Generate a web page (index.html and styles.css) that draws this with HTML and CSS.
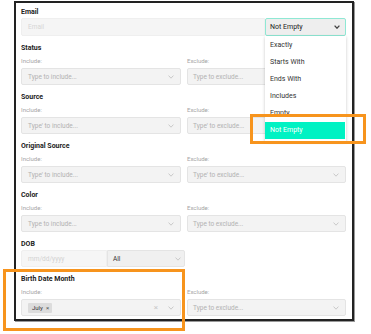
FILE: index.html
```html
<!DOCTYPE html>
<html lang="en">

<head>
    <meta charset="UTF-8">
    <title>Filters</title>
    <link rel="stylesheet" href="styles.css">
</head>

<body>

    <div class="panel">
        <!-- Email -->
        <div class="field">
            <div class="field-title">Email</div>
            <div class="email-row">
                <div class="box email-input"><span class="placeholder">Email</span></div>
                <div class="op-wrap">
                    <div class="box op-select">
                        <span>Not Empty</span>
                        <svg class="chev dark" width="6" height="4" viewBox="0 0 6 4"><path d="M0.6 0.6 L3 3.2 L5.4 0.6" /></svg>
                    </div>
                    <ul class="op-menu">
                        <li>Exactly</li>
                        <li>Starts With</li>
                        <li>Ends With</li>
                        <li>Includes</li>
                        <li>Empty</li>
                        <li class="selected">Not Empty</li>
                    </ul>
                </div>
            </div>
        </div>

        <!-- Status -->
        <div class="field">
            <div class="field-title">Status</div>
            <div class="pair">
                <div>
                    <div class="sub-label">Include:</div>
                    <div class="box multi"><span class="placeholder">Type to include...</span>
                        <svg class="chev" width="6" height="4" viewBox="0 0 6 4"><path d="M0.6 0.6 L3 3.2 L5.4 0.6" /></svg></div>
                </div>
                <div>
                    <div class="sub-label">Exclude:</div>
                    <div class="box multi"><span class="placeholder">Type to exclude...</span>
                        <svg class="chev" width="6" height="4" viewBox="0 0 6 4"><path d="M0.6 0.6 L3 3.2 L5.4 0.6" /></svg></div>
                </div>
            </div>
        </div>

        <!-- Source -->
        <div class="field">
            <div class="field-title">Source</div>
            <div class="pair">
                <div>
                    <div class="sub-label">Include:</div>
                    <div class="box multi"><span class="placeholder">Type' to include...</span>
                        <svg class="chev" width="6" height="4" viewBox="0 0 6 4"><path d="M0.6 0.6 L3 3.2 L5.4 0.6" /></svg></div>
                </div>
                <div>
                    <div class="sub-label">Exclude:</div>
                    <div class="box multi"><span class="placeholder">Type' to exclude...</span>
                        <svg class="chev" width="6" height="4" viewBox="0 0 6 4"><path d="M0.6 0.6 L3 3.2 L5.4 0.6" /></svg></div>
                </div>
            </div>
        </div>

        <!-- Original Source -->
        <div class="field">
            <div class="field-title">Original Source</div>
            <div class="pair">
                <div>
                    <div class="sub-label">Include:</div>
                    <div class="box multi"><span class="placeholder">Type' to include...</span>
                        <svg class="chev" width="6" height="4" viewBox="0 0 6 4"><path d="M0.6 0.6 L3 3.2 L5.4 0.6" /></svg></div>
                </div>
                <div>
                    <div class="sub-label">Exclude:</div>
                    <div class="box multi"><span class="placeholder">Type' to exclude...</span>
                        <svg class="chev" width="6" height="4" viewBox="0 0 6 4"><path d="M0.6 0.6 L3 3.2 L5.4 0.6" /></svg></div>
                </div>
            </div>
        </div>

        <!-- Color -->
        <div class="field">
            <div class="field-title">Color</div>
            <div class="pair">
                <div>
                    <div class="sub-label">Include:</div>
                    <div class="box multi"><span class="placeholder">Type to include...</span>
                        <svg class="chev" width="6" height="4" viewBox="0 0 6 4"><path d="M0.6 0.6 L3 3.2 L5.4 0.6" /></svg></div>
                </div>
                <div>
                    <div class="sub-label">Exclude:</div>
                    <div class="box multi"><span class="placeholder">Type to exclude...</span>
                        <svg class="chev" width="6" height="4" viewBox="0 0 6 4"><path d="M0.6 0.6 L3 3.2 L5.4 0.6" /></svg></div>
                </div>
            </div>
        </div>

        <!-- DOB -->
        <div class="field">
            <div class="field-title">DOB</div>
            <div class="dob-row">
                <div class="box date-input"><span class="placeholder faint">mm/dd/yyyy</span></div>
                <div class="box multi all-select"><span>All</span>
                    <svg class="chev" width="6" height="4" viewBox="0 0 6 4"><path d="M0.6 0.6 L3 3.2 L5.4 0.6" /></svg></div>
            </div>
        </div>

        <!-- Birth Date Month -->
        <div class="field">
            <div class="field-title">Birth Date Month</div>
            <div class="pair">
                <div>
                    <div class="sub-label">Include:</div>
                    <div class="box multi">
                        <span class="chip">July <span class="chip-x">&times;</span></span>
                        <span class="clear-x">&times;</span>
                        <svg class="chev" width="6" height="4" viewBox="0 0 6 4"><path d="M0.6 0.6 L3 3.2 L5.4 0.6" /></svg>
                    </div>
                </div>
                <div>
                    <div class="sub-label">Exclude:</div>
                    <div class="box multi"><span class="placeholder">Type to exclude...</span>
                        <svg class="chev" width="6" height="4" viewBox="0 0 6 4"><path d="M0.6 0.6 L3 3.2 L5.4 0.6" /></svg></div>
                </div>
            </div>
        </div>
    </div>

    <!-- highlight boxes drawn over the screenshot -->
    <div class="callout callout-menu"></div>
    <div class="callout callout-month"></div>

</body>

</html>
```

FILE: styles.css
```css
* {
    box-sizing: border-box;
}

body {
    font-family: Roboto, 'Liberation Sans', sans-serif;
    margin: 0;
    padding: 0;
    background-color: white;
    position: relative;
    width: 371px;
    height: 334px;
    overflow: hidden;
}

.panel {
    margin: 1px 0 0 14px;
    width: 340px;
    height: 320px;
    border: 2px solid #222;
    box-shadow: 1px 1px 0 #999;
    padding: 3px 6px 4px 5px;
    display: flex;
    flex-direction: column;
    gap: 6px;
    background-color: white;
}

.field {
    display: flex;
    flex-direction: column;
}

.field-title {
    font-size: 7px;
    font-weight: 700;
    line-height: 11px;
    padding-top: 1px;
    color: #222;
    margin-bottom: 2px;
}

.sub-label {
    font-size: 6px;
    line-height: 10px;
    color: #a5a5a5;
    margin-bottom: 2px;
}

.box {
    height: 17px;
    border: 1px solid #e4e4e4;
    border-radius: 2px;
    background-color: #f3f3f3;
    display: flex;
    align-items: center;
    font-size: 6.5px;
    color: #333;
}

.placeholder {
    color: #b2b2b2;
}

.placeholder.faint {
    color: #d2d2d2;
}

.chev {
    flex-shrink: 0;
    margin-left: auto;
    fill: none;
    stroke: #c4c4c4;
    stroke-width: 0.9;
}

.chev.dark {
    stroke: #444;
    stroke-width: 1.3;
}

/* Email row */
.email-row {
    display: flex;
    margin-top: -2px;
}

.email-input {
    flex: 1;
    height: 18px;
    padding-left: 6px;
    background-color: #f5f5f5;
    border-color: #efefef;
    border-radius: 2px 0 0 2px;
}

.email-input .placeholder {
    color: #d6d6d6;
}

.op-wrap {
    position: relative;
    width: 81px;
}

.op-select {
    height: 18px;
    padding: 0 5px 0 4px;
    border: 1px solid #8fe8d4;
    background-color: #eeeeee;
    font-size: 7px;
    color: #222;
}

.op-menu {
    position: absolute;
    top: 100%;
    left: 0;
    width: 81px;
    margin: 0;
    padding: 1px 1px 2px 0;
    list-style: none;
    background-color: white;
    box-shadow: 0 1px 3px rgba(0, 0, 0, 0.22);
    z-index: 2;
}

.op-menu li {
    height: 17px;
    line-height: 17px;
    padding-left: 5px;
    font-size: 7px;
    color: #333;
}

.op-menu li.selected {
    background-color: #00f2c3;
    color: white;
}

/* Include / Exclude pairs */
.pair {
    display: grid;
    grid-template-columns: 160px 159px;
    column-gap: 6px;
}

.multi {
    padding: 0 6px 0 6px;
}

.pair > div:nth-child(2) .multi {
    padding-left: 5px;
}

/* DOB */
.dob-row {
    display: flex;
    margin-top: -2px;
}

.date-input {
    width: 86px;
    padding-left: 6px;
    background-color: #f6f6f6;
    border-color: #efefef;
    border-radius: 2px 0 0 2px;
}

.all-select {
    width: 78px;
    padding: 0 3px 0 5px;
    border-radius: 0 2px 2px 0;
    background-color: #f0f0f0;
    color: #333;
}

/* chip */
.chip {
    display: inline-flex;
    align-items: center;
    gap: 3px;
    height: 10px;
    padding: 0 3px 0 4px;
    background-color: #dcdcdc;
    border-radius: 1px;
    font-size: 6px;
    color: #333;
}

.chip-x {
    font-size: 6px;
    color: #555;
}

.clear-x {
    margin-left: auto;
    margin-right: 10px;
    font-size: 8px;
    color: #c8c8c8;
}

.clear-x + .chev {
    margin-left: 0;
}

/* orange annotation frames */
.callout {
    position: absolute;
    border: 3px solid #f7941d;
    z-index: 5;
}

.callout-menu {
    left: 250px;
    top: 114px;
    width: 116px;
    height: 30px;
}

.callout-month {
    left: 3px;
    top: 269px;
    width: 182px;
    height: 62px;
}
```
